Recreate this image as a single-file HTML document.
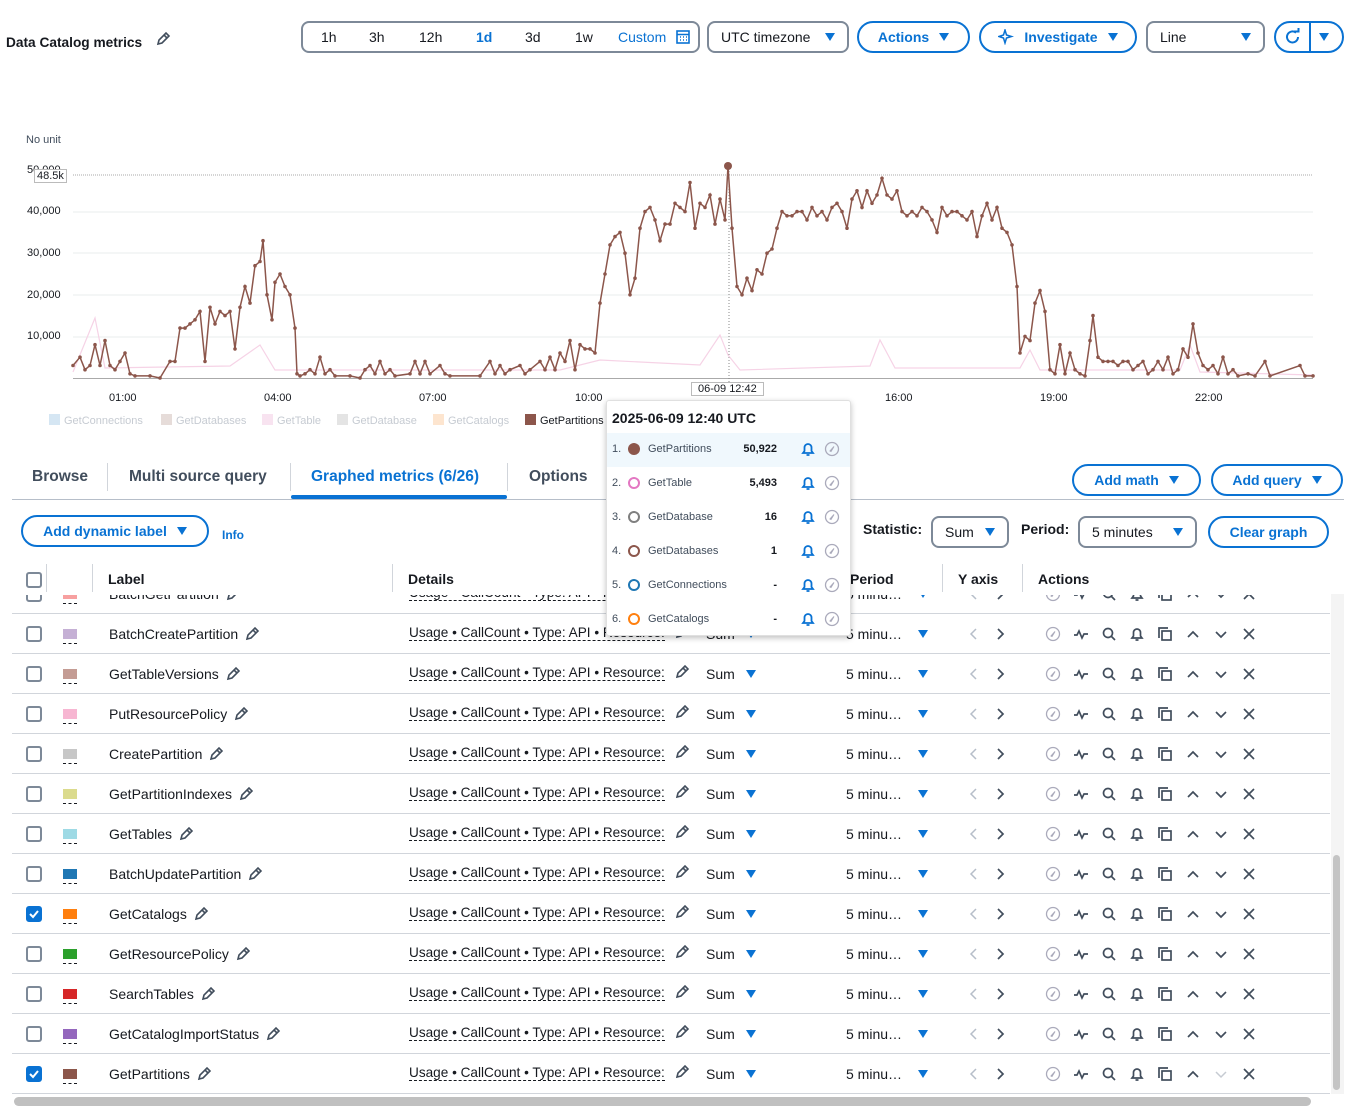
<!DOCTYPE html>
<html><head><meta charset="utf-8">
<style>
*{box-sizing:border-box;margin:0;padding:0}
body{width:1355px;height:1108px;position:relative;overflow:hidden;background:#fff;font-family:"Liberation Sans",sans-serif;color:#16191f;font-size:14px}
.a{position:absolute}
.btn{position:absolute;height:32px;border:2px solid #0972d3;border-radius:16px;color:#0972d3;font-weight:bold;font-size:14px;display:flex;align-items:center;justify-content:center;gap:10px;background:#fff}
.sel{position:absolute;height:32px;border:2px solid #7d8998;border-radius:8px;font-size:14px;display:flex;align-items:center;padding:0 12px;justify-content:space-between;background:#fff}
.tri{display:inline-block;width:0;height:0;border-left:5px solid transparent;border-right:5px solid transparent;border-top:8px solid currentColor}
.tri.b{color:#0972d3}
.cb{position:absolute;width:16px;height:16px;border:2px solid #7d8998;border-radius:3px;background:#fff}
.cb.on{background:#0972d3;border-color:#0972d3}
.sw{position:absolute;width:14px;height:10px}
.sw:after{content:"";position:absolute;left:0;top:14px;width:14px;border-top:1px dashed #16191f}
.row{position:absolute;left:12px;width:1318px;height:40px;border-bottom:1px solid #d1d5db}
.det{border-bottom:1px dashed #16191f;line-height:16px;font-size:13.6px}
.hdr{font-weight:bold;font-size:14px}
.lg{position:absolute;top:414px;font-size:11px;color:#c6cbd2;white-space:nowrap}
.lg i{display:inline-block;width:11px;height:11px;vertical-align:-1px;margin-right:4px}
.tab{font-size:15.5px;font-weight:bold;top:468px}
</style></head><body>

<div class="a" style="left:6px;top:35px;font-weight:bold;font-size:13.7px">Data Catalog metrics</div>
<svg class="a" style="left:155px;top:31px" width="16" height="16" viewBox="0 0 16 16"><path d="M3 13l1-4 7-7 3 3-7 7z M9 4l3 3" fill="none" stroke="#414d5c" stroke-width="1.6"/></svg>

<div class="a" style="left:301px;top:21px;width:399px;height:32px;border:2px solid #7d8998;border-radius:8px"></div>
<div class="a" style="left:321px;top:29px">1h</div>
<div class="a" style="left:369px;top:29px">3h</div>
<div class="a" style="left:419px;top:29px">12h</div>
<div class="a" style="left:476px;top:29px;color:#0972d3;font-weight:bold">1d</div>
<div class="a" style="left:525px;top:29px">3d</div>
<div class="a" style="left:575px;top:29px">1w</div>
<div class="a" style="left:618px;top:29px;color:#0972d3">Custom</div>
<svg class="a" style="left:676px;top:30px" width="14" height="14" viewBox="0 0 14 14"><rect x="1" y="1" width="12" height="12" fill="none" stroke="#0972d3" stroke-width="1.6"/><path d="M1 4.5h12M4 7h1M7 7h1M10 7h1M4 10h1M7 10h1M10 10h1" stroke="#0972d3" stroke-width="1.5"/></svg>

<div class="sel" style="left:707px;top:21px;width:142px"><span>UTC timezone</span><span class="tri b"></span></div>
<div class="btn" style="left:857px;top:21px;width:113px">Actions <span class="tri"></span></div>
<div class="btn" style="left:979px;top:21px;width:158px"><svg width="16" height="16" viewBox="0 0 16 16"><path d="M7 1l1.5 5 5 1.5-5 1.5L7 14l-1.5-5L1 7.5 5.5 6z" fill="none" stroke="#0972d3" stroke-width="1.5"/></svg>Investigate <span class="tri"></span></div>
<div class="sel" style="left:1146px;top:21px;width:119px"><span>Line</span><span class="tri b"></span></div>
<div class="a" style="left:1274px;top:21px;width:70px;height:32px;border:2px solid #0972d3;border-radius:16px"></div>
<div class="a" style="left:1309px;top:22px;width:2px;height:30px;background:#0972d3"></div>
<svg class="a" style="left:1284px;top:28px" width="18" height="18" viewBox="0 0 18 18"><path d="M14 9a5.5 5.5 0 1 1-2-4.3" fill="none" stroke="#0972d3" stroke-width="2"/><path d="M10 3.5h4.5V0" fill="none" stroke="#0972d3" stroke-width="2"/></svg>
<span class="a tri b" style="left:1319px;top:33px"></span>

<!-- chart -->
<div class="a" style="left:26px;top:134px;font-size:11px;color:#414d5c">No unit</div>
<div class="a" style="left:27px;top:164px;font-size:11px">50,000</div>
<div class="a" style="left:34px;top:169px;font-size:11px;background:#fff;border:1px solid #bbb;padding:0 2px;line-height:12px">48.5k</div>
<div class="a" style="left:27px;top:205px;font-size:11px">40,000</div>
<div class="a" style="left:27px;top:247px;font-size:11px">30,000</div>
<div class="a" style="left:27px;top:289px;font-size:11px">20,000</div>
<div class="a" style="left:27px;top:330px;font-size:11px">10,000</div>
<svg id="ch" class="a" style="left:0;top:0" width="1355" height="400"></svg>
<div class="a" style="left:109px;top:392px;font-size:11px">01:00</div>
<div class="a" style="left:264px;top:392px;font-size:11px">04:00</div>
<div class="a" style="left:419px;top:392px;font-size:11px">07:00</div>
<div class="a" style="left:575px;top:392px;font-size:11px">10:00</div>
<div class="a" style="left:885px;top:392px;font-size:11px">16:00</div>
<div class="a" style="left:1040px;top:392px;font-size:11px">19:00</div>
<div class="a" style="left:1195px;top:392px;font-size:11px">22:00</div>
<div class="a" style="left:691px;top:382px;font-size:11px;background:#fff;border:1px solid #bbb;padding:0 6px;line-height:12px">06-09 12:42</div>

<div class="lg" style="left:49px"><i style="background:#d5e6f3"></i>GetConnections</div>
<div class="lg" style="left:161px"><i style="background:#e6dcd9"></i>GetDatabases</div>
<div class="lg" style="left:262px"><i style="background:#f8e3f0"></i>GetTable</div>
<div class="lg" style="left:337px"><i style="background:#e4e4e4"></i>GetDatabase</div>
<div class="lg" style="left:433px"><i style="background:#fde5cf"></i>GetCatalogs</div>
<div class="lg" style="left:525px;color:#16191f"><i style="background:#8c564b"></i>GetPartitions</div>

<!-- tabs -->
<div class="a" style="left:12px;top:499px;width:1332px;height:1px;background:#b6bec9"></div>
<div class="a tab" style="left:32px;color:#414d5c">Browse</div>
<div class="a" style="left:107px;top:463px;width:1px;height:28px;background:#d1d5db"></div>
<div class="a tab" style="left:129px;color:#414d5c">Multi source query</div>
<div class="a" style="left:290px;top:463px;width:1px;height:28px;background:#d1d5db"></div>
<div class="a tab" style="left:311px;color:#0972d3">Graphed metrics (6/26)</div>
<div class="a" style="left:291px;top:495px;width:216px;height:4px;background:#0972d3;border-radius:2px"></div>
<div class="a" style="left:507px;top:463px;width:1px;height:28px;background:#d1d5db"></div>
<div class="a tab" style="left:529px;color:#414d5c">Options</div>
<div class="btn" style="left:1072px;top:464px;width:129px">Add math <span class="tri"></span></div>
<div class="btn" style="left:1211px;top:464px;width:132px">Add query <span class="tri"></span></div>

<div class="btn" style="left:21px;top:515px;width:188px">Add dynamic label <span class="tri"></span></div>
<div class="a" style="left:222px;top:528px;font-size:12px;font-weight:bold;color:#0972d3">Info</div>
<div class="a" style="left:863px;top:521px;font-weight:bold">Statistic:</div>
<div class="sel" style="left:931px;top:516px;width:78px"><span>Sum</span><span class="tri b"></span></div>
<div class="a" style="left:1021px;top:521px;font-weight:bold">Period:</div>
<div class="sel" style="left:1078px;top:516px;width:119px"><span>5 minutes</span><span class="tri b"></span></div>
<div class="btn" style="left:1208px;top:516px;width:121px">Clear graph</div>

<!-- table -->
<div id="tbl" class="a" style="left:0;top:594px;width:1355px;height:500px;overflow:hidden"></div>
<div class="a" style="left:0;top:560px;width:1330px;height:35px;background:#fff"></div>
<div class="cb" style="left:26px;top:572px"></div>
<div class="a" style="left:46px;top:564px;width:1px;height:28px;background:#d1d5db"></div>
<div class="a" style="left:92px;top:564px;width:1px;height:28px;background:#d1d5db"></div>
<div class="a hdr" style="left:108px;top:571px">Label</div>
<div class="a" style="left:392px;top:564px;width:1px;height:28px;background:#d1d5db"></div>
<div class="a hdr" style="left:408px;top:571px">Details</div>
<div class="a hdr" style="left:850px;top:571px">Period</div>
<div class="a" style="left:942px;top:564px;width:1px;height:28px;background:#d1d5db"></div>
<div class="a hdr" style="left:958px;top:571px">Y axis</div>
<div class="a" style="left:1022px;top:564px;width:1px;height:28px;background:#d1d5db"></div>
<div class="a hdr" style="left:1038px;top:571px">Actions</div>

<div class="a" style="left:1331px;top:594px;width:13px;height:500px;background:#f4f4f4"></div>
<div class="a" style="left:1333px;top:855px;width:7px;height:235px;background:#c4c4c4;border-radius:4px"></div>
<div class="a" style="left:14px;top:1097px;width:1297px;height:9px;background:#c0c0c0;border-radius:5px"></div>

<!-- tooltip -->
<div class="a" style="left:606px;top:400px;width:245px;height:236px;background:#fff;border:1px solid #e0e0e0;border-radius:3px;box-shadow:0 2px 6px rgba(0,0,0,.25)">
<div style="position:absolute;left:5px;top:9px;font-weight:bold;font-size:14px">2025-06-09 12:40 UTC</div>
<div id="tt"></div>
</div>

<script>
var P=[[73,3],[80,5],[85,2],[90,3],[95,8],[100,3],[105,9],[110,3],[115,2],[120,4],[125,6],[130,1],[135,.5],[150,.5],[160,0],[170,4],[175,4],[180,12],[185,12],[190,13],[195,14],[200,16],[205,4],[210,17],[215,13],[220,16],[225,15],[230,16],[235,7],[240,17],[245,22],[250,18],[255,27],[260,28],[263,33],[267,20],[272,14],[275,23],[280,25],[285,22],[290,20],[295,12],[297,1],[300,.5],[305,1],[310,2],[315,1],[320,5],[325,1],[330,2],[335,.5],[350,.5],[360,0],[365,2],[370,3],[375,1],[380,4],[385,1],[390,2],[395,.5],[410,1],[415,4],[420,1],[425,4],[430,1],[440,3],[445,1],[450,.5],[480,.5],[490,4],[495,1],[500,3],[505,1],[510,2],[520,3],[525,1],[530,2],[540,4],[545,2],[550,5],[555,2],[560,6],[565,4],[570,9],[575,2],[580,8],[585,7],[590,7],[595,6],[600,18],[605,25],[610,32],[615,34],[620,35],[625,30],[630,20],[635,24],[640,36],[645,40],[650,41],[655,38],[660,33],[665,37],[670,37],[675,42],[680,41],[685,40],[690,47],[695,36],[700,42],[705,41],[710,44],[715,37],[720,43],[725,38],[728,51],[732,36],[737,22],[742,20],[747,24],[752,21],[757,26],[762,25],[767,30],[772,31],[777,36],[782,40],[787,39],[792,39],[797,40],[802,40],[807,38],[812,41],[817,39],[822,40],[827,38],[832,41],[837,42],[842,40],[847,36],[852,43],[857,45],[862,41],[867,45],[872,42],[877,44],[882,48],[887,44],[892,43],[897,45],[902,40],[907,39],[912,40],[917,39],[922,41],[927,40],[932,38],[937,35],[942,41],[947,39],[952,40],[957,40],[962,39],[967,38],[972,40],[977,34],[982,39],[987,42],[992,38],[997,41],[1002,36],[1007,35],[1012,32],[1017,22],[1020,6],[1025,10],[1030,9],[1035,18],[1040,21],[1045,16],[1050,2],[1055,1],[1060,8],[1065,1],[1070,6],[1075,2],[1080,1],[1085,.5],[1090,9],[1093,15],[1098,5],[1103,4],[1108,4],[1113,4],[1118,3],[1123,4],[1128,4],[1133,2],[1138,3],[1143,4],[1148,1],[1153,2],[1158,4],[1163,2],[1168,5],[1173,1],[1178,2],[1183,7],[1188,5],[1193,13],[1198,6],[1203,3],[1208,2],[1213,3],[1218,1],[1223,5],[1228,1],[1233,2],[1238,.5],[1248,1],[1255,.5],[1265,4],[1270,.5],[1300,3],[1305,.5],[1313,.5]];
var s='';
[337,295,253,212].forEach(function(y){s+='<line x1="73" x2="1313" y1="'+y+'" y2="'+y+'" stroke="#eaeded"/>';});
s+='<line x1="73" x2="1313" y1="175" y2="175" stroke="#aaa" stroke-dasharray="1 1"/>';
s+='<line x1="73" x2="1313" y1="378.5" y2="378.5" stroke="#aaa"/>';
s+='<line x1="729" x2="729" y1="168" y2="392" stroke="#888" stroke-dasharray="1 2"/>';
var pk='M73 372 L95 318 L105 368 L230 366 L260 345 L275 370 L560 370 L600 360 L700 365 L720 335 L728 355 L740 370 L870 366 L880 340 L895 368 L1020 368 L1030 350 L1040 370 L1180 370 L1190 345 L1200 372 L1313 375';
s+='<path d="'+pk+'" fill="none" stroke="#f6d3e6" stroke-width="1.2"/>';
var d='';P.forEach(function(p,i){d+=(i?'L':'M')+p[0]+' '+(378-p[1]*4.16).toFixed(1)});
s+='<path d="'+d+'" fill="none" stroke="#8c564b" stroke-width="1.5"/>';
P.forEach(function(p){s+='<circle cx="'+p[0]+'" cy="'+(378-p[1]*4.16).toFixed(1)+'" r="1.8" fill="#8c564b"/>'});
s+='<circle cx="728" cy="166" r="4" fill="#8c564b"/>';
document.getElementById('ch').innerHTML=s;

var bell='<svg width="16" height="16" viewBox="0 0 16 16"><path d="M3 12h10l-1.5-2V6.5a3.5 3.5 0 0 0-7 0V10z M6.5 14h3" fill="none" stroke="#0972d3" stroke-width="1.8"/></svg>';
var comp='<svg width="16" height="16" viewBox="0 0 16 16"><circle cx="8" cy="8" r="6.5" fill="none" stroke="#aab" stroke-width="1.3"/><path d="M10 5.5L7 10.5 6 10z" fill="none" stroke="#aab"/></svg>';
var T=[['GetPartitions','50,922','#8c564b',1],['GetTable','5,493','#e377c2',0],['GetDatabase','16','#7f7f7f',0],['GetDatabases','1','#8c564b',0],['GetConnections','-','#1f77b4',0],['GetCatalogs','-','#ff7f0e',0]];
var t='';T.forEach(function(r,i){var y=32+i*34;
t+='<div style="position:absolute;left:0;top:'+y+'px;width:243px;height:34px;'+(i==0?'background:#f0f8fd;':'')+'font-size:11px">'+
'<span style="position:absolute;left:5px;top:10px;color:#414d5c">'+(i+1)+'.</span>'+
'<span style="position:absolute;left:21px;top:10px;width:12px;height:12px;border-radius:50%;'+(r[3]?'background:'+r[2]:'border:2px solid '+r[2])+'"></span>'+
'<span style="position:absolute;left:41px;top:10px;color:#414d5c">'+r[0]+'</span>'+
'<span style="position:absolute;right:73px;top:10px;font-weight:bold">'+r[1]+'</span>'+
'<span style="position:absolute;left:193px;top:8px">'+bell+'</span><span style="position:absolute;left:217px;top:8px">'+comp+'</span></div>';});
document.getElementById('tt').innerHTML=t;

var R=[['BatchGetPartition','#f7a0a0',0],['BatchCreatePartition','#c5b0d5',0],['GetTableVersions','#c49c94',0],['PutResourcePolicy','#f7b6d2',0],['CreatePartition','#c7c7c7',0],['GetPartitionIndexes','#dbdb8d',0],['GetTables','#9edae5',0],['BatchUpdatePartition','#1f77b4',0],['GetCatalogs','#ff7f0e',1],['GetResourcePolicy','#2ca02c',0],['SearchTables','#d62728',0],['GetCatalogImportStatus','#9467bd',0],['GetPartitions','#8c564b',1]];
var pen='<svg width="16" height="16" viewBox="0 0 16 16" style="vertical-align:-3px;margin-left:6px"><path d="M3 13l1-4 7-7 3 3-7 7z M9 4l3 3" fill="none" stroke="#414d5c" stroke-width="1.6"/></svg>';
var sg='fill="none" stroke="#414d5c" stroke-width="1.7"';
var acts=['<circle cx="8" cy="8" r="6.5" fill="none" stroke="#aab" stroke-width="1.3"/><path d="M10 5.5L7 10.5 6 10z" fill="none" stroke="#aab"/>',
'<path d="M1 9h3l2-4 3 7 2-4h4" '+sg+' stroke-width="1.3"/>',
'<circle cx="7" cy="7" r="4.5" '+sg+'/><path d="M10.5 10.5L14 14" '+sg+'/>',
'<path d="M3 12h10l-1.5-2V6.5a3.5 3.5 0 0 0-7 0V10z M6.5 14h3" '+sg+'/>',
'<path d="M2 12V2h9" '+sg+'/><rect x="5" y="5" width="9" height="9" '+sg+'/>',
'<path d="M3 11l5-5 5 5" '+sg+'/>',
'<path d="M3 6l5 5 5-5" '+sg+'/>',
'<path d="M3 3l10 10M13 3L3 13" '+sg+'/>'];
var h='';R.forEach(function(r,i){var top=-20+i*40;
h+='<div class="row" style="top:'+top+'px"></div>';
h+='<div class="cb'+(r[2]?' on':'')+'" style="left:26px;top:'+(top+12)+'px">'+(r[2]?'<svg width="12" height="12" viewBox="0 0 12 12" style="position:absolute;left:0;top:0"><path d="M2 6l3 3 5-6" fill="none" stroke="#fff" stroke-width="2"/></svg>':'')+'</div>';
h+='<div class="sw" style="left:63px;top:'+(top+15)+'px;background:'+r[1]+'"></div>';
h+='<div class="a" style="left:109px;top:'+(top+12)+'px">'+r[0]+pen+'</div>';
h+='<div class="a" style="left:409px;top:'+(top+10)+'px;white-space:nowrap"><span class="det">Usage • CallCount • Type: API • Resource:</span>'+pen.replace('margin-left:6px','margin-left:9px')+'</div>';
h+='<div class="a" style="left:706px;top:'+(top+12)+'px">Sum</div><span class="a tri b" style="left:746px;top:'+(top+16)+'px"></span>';
h+='<div class="a" style="left:846px;top:'+(top+12)+'px">5 minu…</div><span class="a tri b" style="left:918px;top:'+(top+16)+'px"></span>';
h+='<svg class="a" style="left:966px;top:'+(top+12)+'px" width="40" height="16" viewBox="0 0 40 16"><path d="M10 3L5 8l5 5" fill="none" stroke="#b6bec9" stroke-width="1.5"/><path d="M32 3l5 5-5 5" fill="none" stroke="#414d5c" stroke-width="1.7"/></svg>';
acts.forEach(function(a,j){var op=(j==6&&i==12)?'<path d="M3 6l5 5 5-5" fill="none" stroke="#c6cbd2" stroke-width="1.5"/>':a;
h+='<svg class="a" style="left:'+(1045+j*28)+'px;top:'+(top+12)+'px" width="16" height="16" viewBox="0 0 16 16">'+op+'</svg>';});
});
document.getElementById('tbl').innerHTML=h;
</script>
</body></html>
